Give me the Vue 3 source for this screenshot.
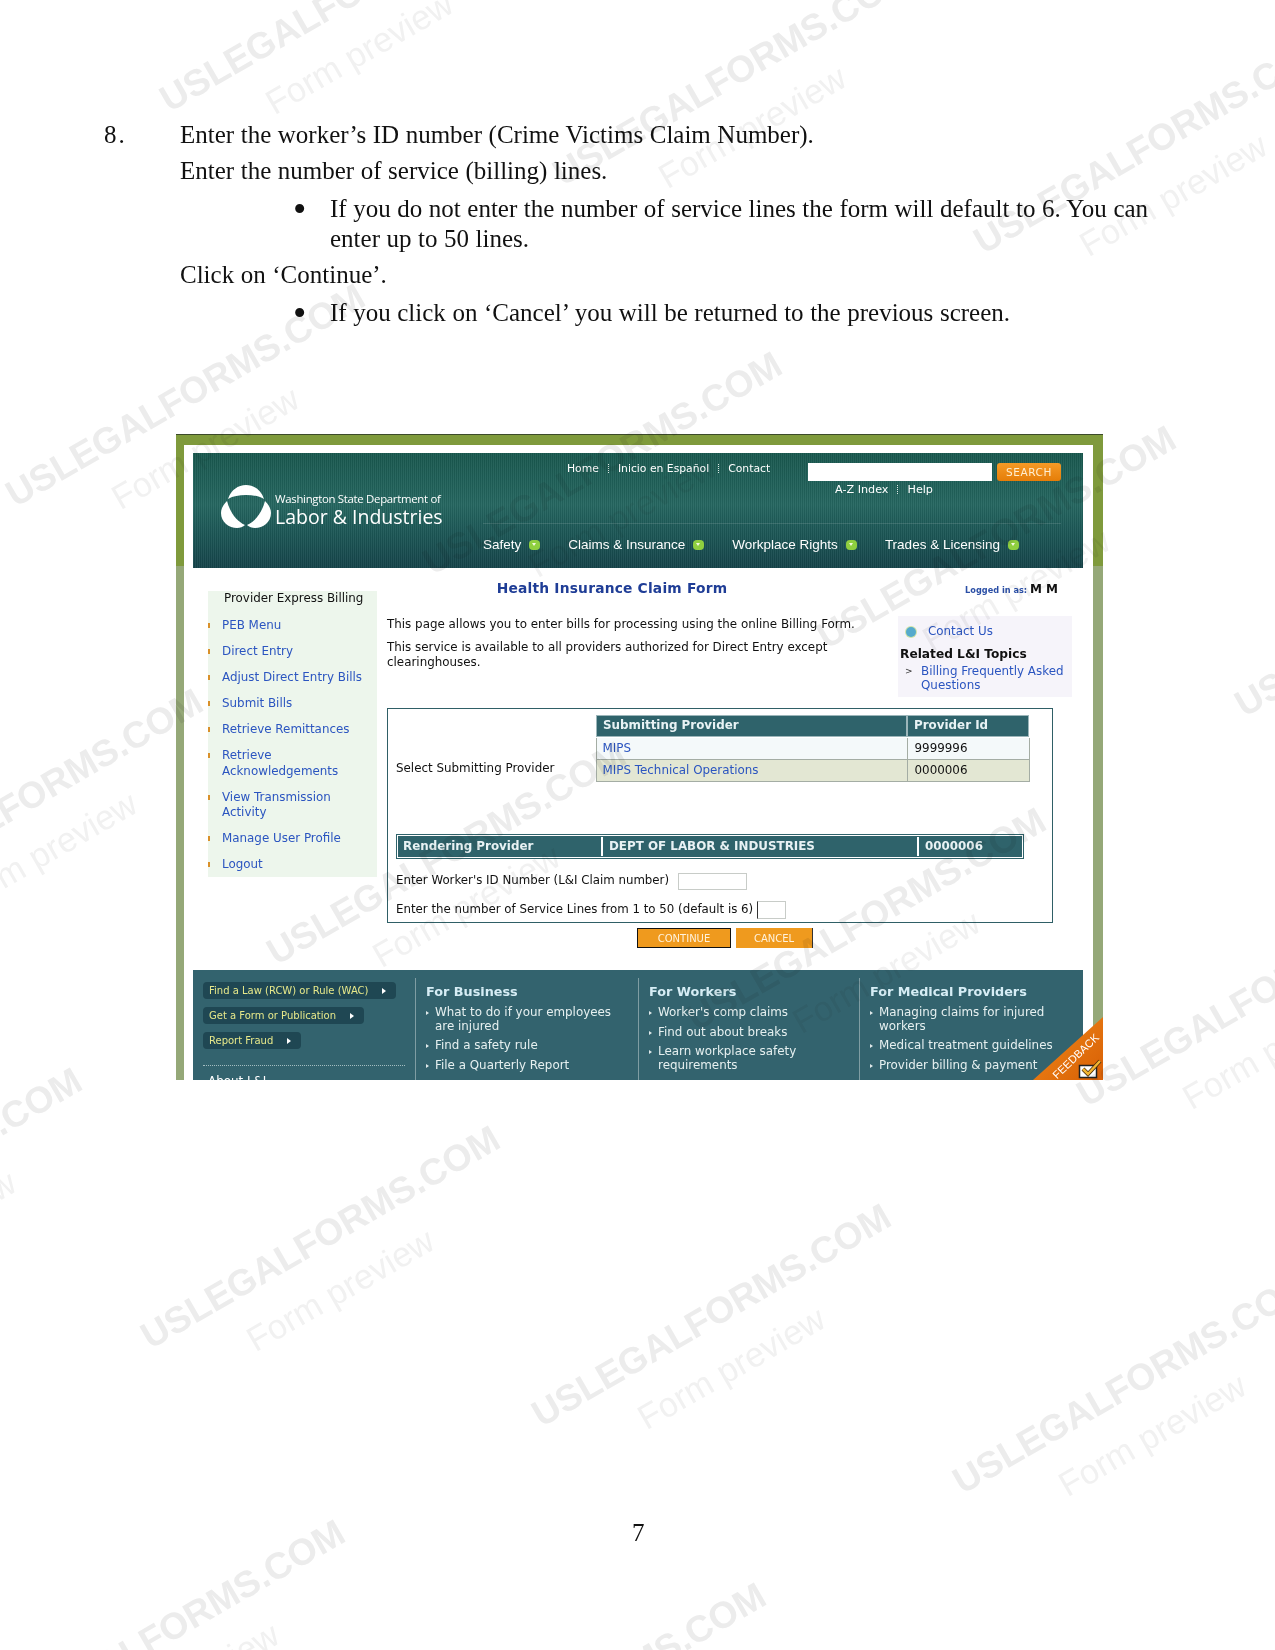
<template>
  <div class="doc">
    <div class="step">
      <span class="step-no">8.</span>
      <div class="step-body">
        <p class="line-1">Enter the worker’s ID number (Crime Victims Claim Number).</p>
        <p class="line-2">Enter the number of service (billing) lines.</p>
        <div class="bullet b1"><span class="dot">•</span><p>If you do not enter the number of service lines the form will default to 6. You can enter up to 50 lines.</p></div>
        <p class="line-3">Click on ‘Continue’.</p>
        <div class="bullet b2"><span class="dot">•</span><p>If you click on ‘Cancel’ you will be returned to the previous screen.</p></div>
      </div>
    </div>

    <div class="shot">
      <div class="shot-band"></div>
      <div class="site">
        <header class="site-head">
          <div class="brand">
            <svg class="logo" viewBox="0 0 50 44">
              <path d="M7 14C10 5 17 0 25 0C33 0 40 5 43 14C38 11 32 10 25 10C18 10 12 11 7 14Z" fill="#fff"/>
              <path d="M6 16C2 20 0 24 0 28C0 37 8 43 16 43C19 43 22 42 24 40C15 36 9 27 6 16Z" fill="#fff"/>
              <path d="M44 16C48 20 50 24 50 28C50 37 42 43 34 43C31 43 28 42 26 40C35 36 41 27 44 16Z" fill="#fff"/>
            </svg>
            <div class="brand-text">
              <div class="brand-sm">Washington State Department of</div>
              <div class="brand-lg">Labor &amp; Industries</div>
            </div>
          </div>
          <div class="head-right">
            <div class="head-top">
              <nav class="top-nav">
                <a>Home</a><i></i><a>Inicio en Español</a><i></i><a>Contact</a>
              </nav>
              <div class="search">
                <div class="search-row">
                  <input class="search-input" type="text" />
                  <button class="search-btn">SEARCH</button>
                </div>
                <div class="search-links"><a>A-Z Index</a><i></i><a>Help</a></div>
              </div>
            </div>
            <nav class="menu">
              <a v-for="m in menu" :key="m" class="menu-item">{{ m }}<span class="chip"></span></a>
            </nav>
          </div>
        </header>

        <div class="site-body">
          <aside class="side">
            <div class="side-title">Provider Express Billing</div>
            <a v-for="s in sideLinks" :key="s" class="side-link">{{ s }}</a>
          </aside>

          <main class="content">
            <div class="title-row">
              <h1>Health Insurance Claim Form</h1>
              <div class="logged"><span>Logged in as:</span> <b>M M</b></div>
            </div>
            <div class="intro-row">
              <div class="intro">
                <p>This page allows you to enter bills for processing using the online Billing Form.</p>
                <p>This service is available to all providers authorized for Direct Entry except clearinghouses.</p>
              </div>
              <div class="related">
                <div class="contact">
                  <span class="contact-ico"></span><a>Contact Us</a>
                </div>
                <h3>Related L&amp;I Topics</h3>
                <div class="rel-link"><span>&gt;</span><a>Billing Frequently Asked Questions</a></div>
              </div>
            </div>

            <section class="box">
              <div class="select-row">
                <span class="select-label">Select Submitting Provider</span>
                <table class="prov">
                  <thead>
                    <tr><th class="c1">Submitting Provider</th><th>Provider Id</th></tr>
                  </thead>
                  <tbody>
                    <tr><td><a>MIPS</a></td><td class="num">9999996</td></tr>
                    <tr class="alt"><td><a>MIPS Technical Operations</a></td><td class="num">0000006</td></tr>
                  </tbody>
                </table>
              </div>
              <div class="rendering">
                <div class="r1">Rendering Provider</div>
                <div class="r2">DEPT OF LABOR &amp; INDUSTRIES</div>
                <div class="r3">0000006</div>
              </div>
              <div class="field f1">
                <span>Enter Worker's ID Number (L&amp;I Claim number)</span>
                <input class="id-input" type="text" />
              </div>
              <div class="field f2">
                <span>Enter the number of Service Lines from 1 to 50 (default is 6)</span>
                <input class="lines-input" type="text" />
              </div>
            </section>

            <div class="actions">
              <button class="btn btn-main">CONTINUE</button>
              <button class="btn btn-cancel">CANCEL</button>
            </div>
          </main>
        </div>

        <footer class="site-foot">
          <div class="foot-left">
            <a v-for="p in pills" :key="p" class="pill">{{ p }}<span class="tri"></span></a>
            <div class="dots"></div>
            <div class="about">About L&amp;I</div>
          </div>
          <div v-for="col in footCols" :key="col.title" class="foot-col">
            <h4>{{ col.title }}</h4>
            <a v-for="l in col.links" :key="l" class="foot-link">{{ l }}</a>
          </div>
        </footer>
      </div>

      <div class="feedback">
        <span class="fb-text">FEEDBACK</span>
        <svg class="fb-check" viewBox="0 0 24 21">
          <rect x="1.500" y="7.500" width="17" height="12" fill="#fff" stroke="#222" stroke-width="1.500"/>
          <path d="M5 11L10 16L22 3" fill="none" stroke="#4a2a08" stroke-width="4"/>
          <path d="M5 11L10 16L22 3" fill="none" stroke="#f2b632" stroke-width="2.500"/>
        </svg>
      </div>
    </div>

    <div class="page-no">7</div>

    <div class="marks">
      <div v-for="(w, i) in marks" :key="i" class="mark" :style="{ left: w[0] * 1.052 + 'px', top: w[1] * 1.052 + 'px' }">
        <span class="mark-main">USLEGALFORMS.COM</span>
        <span class="mark-sub">Form preview</span>
      </div>
    </div>
  </div>
</template>

<script setup>
const menu = ['Safety', 'Claims & Insurance', 'Workplace Rights', 'Trades & Licensing']

const sideLinks = [
  'PEB Menu',
  'Direct Entry',
  'Adjust Direct Entry Bills',
  'Submit Bills',
  'Retrieve Remittances',
  'Retrieve Acknowledgements',
  'View Transmission Activity',
  'Manage User Profile',
  'Logout'
]

const pills = ['Find a Law (RCW) or Rule (WAC)', 'Get a Form or Publication', 'Report Fraud']

const footCols = [
  {
    title: 'For Business',
    links: ['What to do if your employees are injured', 'Find a safety rule', 'File a Quarterly Report']
  },
  {
    title: 'For Workers',
    links: ["Worker's comp claims", 'Find out about breaks', 'Learn workplace safety requirements']
  },
  {
    title: 'For Medical Providers',
    links: ['Managing claims for injured workers', 'Medical treatment guidelines', 'Provider billing & payment']
  }
]

// start of each watermark, bottom left, in the shrunk picture's coordinates
const marks = [
  [148, 105], [522, 175], [922, 240],
  [2, 480], [398, 545], [773, 615],
  [-152, 865], [250, 915], [649, 978], [1170, 680],
  [-267, 1225], [130, 1280], [502, 1355], [902, 1418], [1020, 1050],
  [-17, 1655], [383, 1715]
]
</script>

<style>
html, body {
  background: #fff;
}
</style>

<style scoped>
.doc {
  position: relative;
  width: 1275px;
  height: 1650px;
  overflow: hidden;
  padding-top: 120px;
  box-sizing: border-box;
  font-family: "Liberation Serif", serif;
  font-size: 25px;
  line-height: 30px;
  word-spacing: 0.3px;
  color: #111;
}

p {
  margin: 0;
}

/* numbered step */
.step {
  display: flex;
  padding-left: 104px;
}

.step-no {
  width: 76px;
  letter-spacing: 2px;
}

.step-body {
  width: 970px;
}

.line-2 {
  margin-top: 6px;
}

.bullet {
  display: flex;
  margin-left: 113px;
  width: 860px;
}

.bullet .dot {
  flex: none;
  width: 37px;
  font-size: 38px;
}

.b1 {
  margin-top: 8px;
}

.b2 {
  margin-top: 8px;
}

.line-3 {
  margin-top: 6px;
}

/* screenshot of the site */
.shot {
  position: relative;
  margin-left: 176px;
  margin-top: 106px;
  width: 927px;
  height: 646px;
  overflow: hidden;
  box-sizing: border-box;
  border-top: 1px solid #3c4a2a;
  background: linear-gradient(#7f9a3c 0, #7f9a3c 131px, #95a878 131px);
  font-family: "DejaVu Sans", sans-serif;
  font-size: 11.9px;
  line-height: 15.5px;
  word-spacing: 0;
}

.shot-band {
  height: 10px;
}

.site {
  margin: 0 10px 0 8px;
  padding: 8px 10px 0 9px;
  background: #fff;
  height: 100%;
}

/* header */
.site-head {
  display: flex;
  height: 115px;
  color: #fff;
  background:
    repeating-linear-gradient(90deg, rgba(255, 255, 255, 0.05) 0 1px, rgba(0, 0, 0, 0.05) 1px 2px),
    linear-gradient(#18584e 0, #256660 45%, #1b5655 70%, #15444a 100%);
}

.brand {
  display: flex;
  align-items: flex-start;
  flex: none;
  width: 290px;
  padding: 32px 0 0 28px;
  box-sizing: border-box;
}

.logo {
  width: 50px;
  height: 44px;
  flex: none;
}

.brand-text {
  margin: 7px 0 0 4px;
  font-family: "Open Sans", sans-serif;
}

.brand-sm {
  font-size: 11.4px;
  line-height: 14px;
  letter-spacing: -0.3px;
  white-space: nowrap;
}

.brand-lg {
  font-size: 19.5px;
  line-height: 21px;
  white-space: nowrap;
}

.head-right {
  flex: 1;
  display: flex;
  flex-direction: column;
}

.head-top {
  display: flex;
  height: 70px;
  padding-left: 84px;
  border-bottom: 1px solid rgba(255, 255, 255, 0.12);
  margin-right: 32px;
}

.top-nav {
  display: flex;
  align-items: center;
  align-self: flex-start;
  height: 15px;
  margin-top: 8px;
  width: 241px;
  font-size: 10.8px;
}

.top-nav i,
.search-links i {
  display: block;
  height: 9px;
  margin: 0 9px;
  border-left: 1px dotted #dfe9e6;
}

.search {
  padding-top: 10px;
}

.search-row {
  display: flex;
  gap: 5px;
}

.search-input {
  width: 184px;
  height: 18px;
  box-sizing: border-box;
  border: 0;
  padding: 0;
  background: #fff;
}

.search-btn {
  width: 64px;
  height: 18px;
  padding: 0;
  border: 0;
  border-radius: 3px;
  background: linear-gradient(#f59a26, #e57d08);
  color: #ffeed0;
  font: 10.5px "DejaVu Sans", sans-serif;
  letter-spacing: 0.6px;
}

.search-links {
  display: flex;
  align-items: center;
  margin: 1px 0 0 27px;
  height: 15px;
  font-size: 11.2px;
}

.menu {
  display: flex;
  gap: 28px;
  padding-top: 13px;
  font-family: "Liberation Sans", sans-serif;
  font-size: 13.5px;
  line-height: 16px;
}

.menu-item {
  display: flex;
  align-items: center;
}

.chip {
  position: relative;
  display: block;
  width: 11px;
  height: 10px;
  margin-left: 8px;
  border-radius: 4px;
  background: #8fcf3f;
}

.chip::after {
  content: "";
  position: absolute;
  left: 3px;
  top: 3px;
  border-top: 3px solid #f2f8e0;
  border-left: 2.500px solid transparent;
  border-right: 2.500px solid transparent;
}

/* body */
.site-body {
  display: flex;
  gap: 10px;
}

.side {
  width: 169px;
  height: 286px;
  margin: 23px 0 0 15px;
  padding-right: 8px;
  box-sizing: border-box;
  background: #edf6ec;
}

.side-title {
  padding: 0 0 0 16px;
  height: 27px;
  line-height: 15px;
  color: #111;
  white-space: nowrap;
}

.side-link {
  display: block;
  position: relative;
  padding: 0 0 10.500px 14px;
  color: #2b55c0;
}

.side-link::before {
  content: "";
  position: absolute;
  left: 0;
  top: 5px;
  border-left: 2px solid #d9902a;
  height: 5px;
}

.content {
  width: 685px;
}

.title-row {
  position: relative;
  height: 28px;
  padding-top: 11px;
}

.title-row h1 {
  margin: 0;
  font-size: 13.8px;
  line-height: 18px;
  font-weight: 700;
  letter-spacing: 0.2px;
  color: #1f3d96;
  text-align: center;
  width: 450px;
}

.logged {
  position: absolute;
  right: 14px;
  top: 14px;
  font-size: 8.2px;
  font-weight: 700;
  color: #2b4fa6;
  white-space: nowrap;
}

.logged b {
  font-size: 12px;
  color: #111;
}

.intro-row {
  display: flex;
  height: 101px;
}

.intro {
  width: 511px;
  flex: none;
  padding-top: 10px;
  color: #111;
}

.intro p {
  margin-bottom: 7px;
  width: 476px;
}

.intro p:first-child {
  width: 500px;
  white-space: nowrap;
}

.related {
  width: 174px;
  height: 81px;
  margin-top: 9px;
  padding: 8px 2px 0;
  box-sizing: border-box;
  background: #f6f4fa;
}

.contact {
  display: flex;
  align-items: center;
  padding-left: 6px;
  color: #2b55c0;
}

.contact-ico {
  width: 10px;
  height: 10px;
  margin-right: 12px;
  border-radius: 50%;
  background: #55aacc;
  box-shadow: 0 0 0 1px #cfe3a8;
}

.related h3 {
  margin: 6px 0 2px;
  font-size: 12.2px;
  line-height: 16px;
  color: #111;
  white-space: nowrap;
}

.rel-link {
  display: flex;
  color: #2b55c0;
  line-height: 14px;
}

.rel-link span {
  width: 21px;
  padding-left: 5px;
  box-sizing: border-box;
  color: #333;
  font-size: 9px;
  flex: none;
}

/* provider box */
.box {
  width: 666px;
  height: 215px;
  box-sizing: border-box;
  border: 1px solid #2f5f66;
  padding: 5px 0 0 8px;
  color: #111;
}

.select-row {
  display: flex;
  align-items: flex-start;
  height: 68px;
}

.select-label {
  width: 199px;
  flex: none;
  margin-top: 47px;
}

.prov {
  width: 435px;
  flex: none;
  border-collapse: collapse;
  table-layout: fixed;
}

.prov th {
  height: 20px;
  padding: 0 6px;
  background: #2f636b;
  color: #e8f2f4;
  text-align: left;
  border: 2px solid #fff;
  outline: 1px solid #9cb6ba;
  outline-offset: -1px;
}

.prov .c1 {
  width: 311px;
  box-sizing: border-box;
}

.prov td {
  height: 21px;
  padding: 0 6px;
  background: #f4f9fa;
  border: 1px solid #a4ada4;
}

.prov td.num {
  padding-left: 7px;
}

.prov .alt td {
  background: #e3e7d3;
}

.prov a {
  color: #2b55c0;
}

.rendering {
  display: flex;
  width: 628px;
  height: 25px;
  margin-top: 52px;
  box-sizing: border-box;
  padding: 2px;
  gap: 2px;
  background: #2f636b;
  border: 1px solid #2f636b;
  outline: 1px solid #fff;
  outline-offset: -2px;
  font-weight: 700;
  color: #e8f2f4;
  line-height: 19px;
}

.rendering div {
  background: #2f636b;
  padding-left: 4px;
  white-space: nowrap;
}

.r1 {
  width: 198px;
  border-right: 2px solid #fff;
}

.r2 {
  width: 308px;
  border-right: 2px solid #fff;
}

.field {
  display: flex;
  align-items: center;
  font-size: 11.8px;
}

.f1 {
  margin-top: 13px;
  height: 18px;
}

.f2 {
  margin-top: 11px;
  height: 18px;
}

.id-input {
  width: 69px;
  height: 17px;
  margin-left: 9px;
  box-sizing: border-box;
  border: 1px solid #c8ccc8;
  background: #fff;
}

.lines-input {
  width: 29px;
  height: 18px;
  margin-left: 4px;
  box-sizing: border-box;
  border: 1px solid #c8ccc8;
  border-left: 1px solid #333;
  background: #fff;
}

.actions {
  display: flex;
  gap: 5px;
  margin: 5px 0 0 250px;
}

.btn {
  height: 20px;
  padding: 0;
  border: 0;
  background: #ef9a1e;
  color: #fff2dc;
  font: 10px "DejaVu Sans", sans-serif;
}

.btn-main {
  width: 94px;
  border: 1px solid #111;
}

.btn-cancel {
  width: 77px;
  border-right: 1px solid #333;
}

/* footer */
.site-foot {
  display: grid;
  grid-template-columns: 222px 223px 221px 1fr;
  height: 130px;
  margin-top: 22px;
  background: #33636e;
  color: #e6f0f0;
}

.foot-left {
  padding: 12px 10px 0 10px;
}

.pill {
  display: flex;
  align-items: center;
  width: fit-content;
  height: 17px;
  margin-bottom: 8px;
  padding: 0 10px 0 6px;
  border-radius: 4px;
  background: #1f4753;
  color: #e6e88a;
  font-size: 10px;
  white-space: nowrap;
}

.tri {
  margin-left: 14px;
  border-left: 4px solid #fff;
  border-top: 3px solid transparent;
  border-bottom: 3px solid transparent;
}

.dots {
  margin-top: 16px;
  border-top: 1px dotted #a3bcc0;
}

.about {
  margin: 8px 0 0 5px;
  color: #fff;
}

.foot-col {
  margin-top: 8px;
  padding: 5px 0 0 10px;
  border-left: 1px solid #7f9da3;
}

.foot-col h4 {
  margin: 0 0 5px;
  font-size: 12.8px;
  line-height: 18px;
  font-weight: 700;
  color: #d6edf5;
}

.foot-link {
  display: block;
  position: relative;
  padding: 0 8px 6px 9px;
  line-height: 13.500px;
  width: 195px;
  box-sizing: border-box;
}

.foot-link::before {
  content: "";
  position: absolute;
  left: 0;
  top: 5px;
  border-left: 3px solid #dfe9ea;
  border-top: 2px solid transparent;
  border-bottom: 2px solid transparent;
}

/* feedback corner */
.feedback {
  position: absolute;
  right: 0;
  bottom: 0;
  width: 70px;
  height: 63px;
  background: linear-gradient(135deg, #f08a1a, #d85f05);
  clip-path: polygon(100% 0, 100% 100%, 0 100%);
}

.fb-text {
  position: absolute;
  left: 13px;
  top: 33px;
  font-family: "Liberation Sans", sans-serif;
  font-size: 11px;
  line-height: 12px;
  color: #fff;
  transform: rotate(-44deg);
}

.fb-check {
  position: absolute;
  right: 1px;
  bottom: 1px;
  width: 24px;
  height: 21px;
}

.page-no {
  position: absolute;
  left: 632px;
  top: 1518px;
}

/* watermark laid over the whole page */
.marks {
  position: absolute;
  inset: 0;
  pointer-events: none;
  mix-blend-mode: multiply;
}

.mark {
  position: absolute;
  width: 0;
  height: 0;
  transform: rotate(-30deg);
  transform-origin: 0 0;
  font-family: "Liberation Sans", sans-serif;
  white-space: nowrap;
}

.mark-main {
  position: absolute;
  left: 10px;
  bottom: -17px;
  font-size: 37px;
  font-weight: 700;
  line-height: 40px;
  color: #ececec;
}

.mark-sub {
  position: absolute;
  left: 100px;
  bottom: -72px;
  font-size: 34.5px;
  line-height: 40px;
  color: #f1f1f1;
}
</style>
